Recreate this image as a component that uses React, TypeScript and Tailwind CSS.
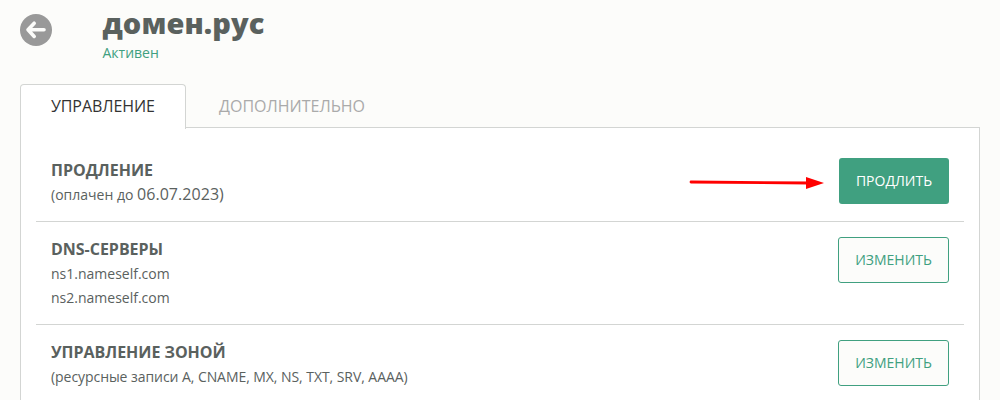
import type { ReactNode } from "react";

function BackButton() {
  return (
    <button type="button" aria-label="Назад" className="mt-3.5 size-8 shrink-0">
      <svg viewBox="0 0 32 32" className="size-8">
        <circle cx="16" cy="16" r="16" fill="#999999" />
        <path
          d="M14.2 9.2 L8 15.8 L14.2 22.4 M8.5 15.8 H24"
          fill="none"
          stroke="#fcfcfa"
          strokeWidth="3.6"
          strokeLinecap="round"
          strokeLinejoin="round"
        />
      </svg>
    </button>
  );
}

function Row({
  title,
  action,
  primary,
  marker,
  children,
}: {
  title: string;
  action: string;
  primary?: boolean;
  marker?: ReactNode;
  children: ReactNode;
}) {
  return (
    <div className="mx-[15px] flex items-start border-b border-[#d3d5d3] px-[15px] pt-[15px] pb-3.5">
      <div className="flex-1 text-sm leading-6">
        <h2 className="mb-px text-base leading-6 font-bold tracking-[-0.02px]">{title}</h2>
        {children}
      </div>
      {marker}
      <button
        type="button"
        className={
          primary
            ? "h-[46px] w-[110px] rounded-[3px] bg-[#40a080] text-sm text-white"
            : "h-[46px] w-[111px] rounded-[3px] border border-[#40a080] bg-[#fcfcfa] text-sm text-[#40a080]"
        }
      >
        {action}
      </button>
    </div>
  );
}

function Arrow() {
  return (
    <svg viewBox="0 0 136 14" className="mt-[18px] mr-[14px] h-3.5 w-[136px]">
      <path d="M2 6 L120 7" stroke="#ff0000" strokeWidth="2.8" strokeLinecap="round" />
      <path d="M117 1 L135 7 L117 13 Z" fill="#ff0000" />
    </svg>
  );
}

export default function App() {
  return (
    <div className="h-[400px] overflow-hidden bg-[#fcfcfa] px-5 font-['Open_Sans',sans-serif] text-[#5a615e]">
      <header className="flex h-[84px] items-start">
        <BackButton />
        <div className="ml-[50.5px]">
          <h1 className="mt-1 h-[37px] text-[29px] leading-[37px] font-extrabold tracking-[0.1px]">
            домен.рус
          </h1>
          <p className="text-sm leading-6 text-[#40a080]">Активен</p>
        </div>
      </header>

      <nav className="flex h-11 text-base">
        <div className="relative h-[45px] w-[166px] rounded-t-[4px] border border-b-0 border-[#d3d5d3] bg-white pl-[30px] leading-[43px] tracking-[-0.08px] text-[#333333]">
          УПРАВЛЕНИЕ
        </div>
        <div className="pl-[33px] leading-[45px] text-[#aaaaaa]">ДОПОЛНИТЕЛЬНО</div>
      </nav>

      <main className="-mt-px h-[400px] border border-[#d3d5d3] bg-white pt-[15px]">
        <Row title="ПРОДЛЕНИЕ" action="ПРОДЛИТЬ" primary marker={<Arrow />}>
          <p className="-mt-px">
            (оплачен до <span className="text-base leading-6 tracking-[0.05px]">06.07.2023)</span>
          </p>
        </Row>
        <Row title="DNS-СЕРВЕРЫ" action="ИЗМЕНИТЬ">
          <p>ns1.nameself.com</p>
          <p>ns2.nameself.com</p>
        </Row>
        <Row title="УПРАВЛЕНИЕ ЗОНОЙ" action="ИЗМЕНИТЬ">
          <p className="tracking-[-0.06px]">(ресурсные записи A, CNAME, MX, NS, TXT, SRV, AAAA)</p>
        </Row>
      </main>
    </div>
  );
}
